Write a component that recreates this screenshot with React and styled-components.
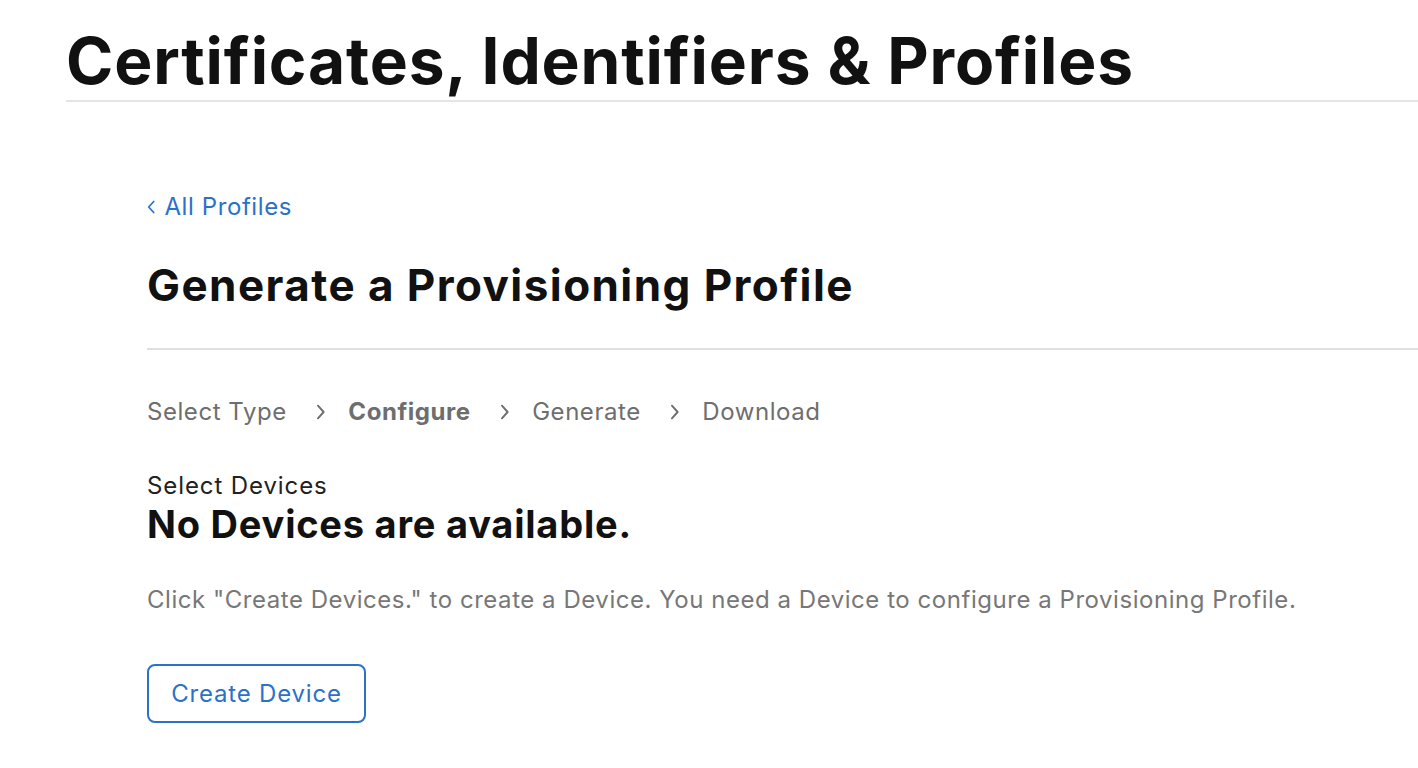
import React from "react";
import styled, { createGlobalStyle } from "styled-components";

const Global = createGlobalStyle`
  body {
    margin: 0;
    background: #fff;
    font-family: Inter, "Noto Sans", sans-serif;
    color: #111;
  }
`;

const Page = styled.div`
  padding-left: 66px;
  padding-top: 21px;
`;

const Header = styled.header`
  border-bottom: 2px solid #e5e5e5;
  h1 {
    margin: 0;
    font-size: 64px;
    font-weight: 700;
    line-height: 79px;
    letter-spacing: 0.85px;
  }
`;

const Main = styled.main`
  padding-left: 81px;
  padding-top: 90px;
`;

const BackLink = styled.a`
  display: inline-flex;
  align-items: center;
  gap: 9px;
  font-size: 24px;
  letter-spacing: 0.6px;
  color: #2a72c8;
  text-decoration: none;
  line-height: 30px;
`;

const TitleBlock = styled.div`
  border-bottom: 2px solid #e0e0e0;
  padding: 36px 0 36px;
  h2 {
    margin: 0;
    font-size: 44px;
    font-weight: 700;
    line-height: 54px;
    letter-spacing: 1.43px;
  }
`;

const Steps = styled.ol`
  list-style: none;
  margin: 0;
  padding: 0;
  margin-top: 47px;
  display: flex;
  align-items: center;
  gap: 23px;
  font-size: 24px;
  line-height: 30px;
  letter-spacing: 0.55px;
  color: #6e6e6e;
`;

const Step = styled.li`
  font-weight: ${(p) => (p.$active ? 700 : 400)};
  display: flex;
  align-items: center;
  gap: 29px;
`;

const Chevron = ({ color = "currentColor", size = 14, left = false }) => (
  <svg width={size * 0.6} height={size} viewBox="0 0 8 14" fill="none">
    <path
      d={left ? "M6.5 1.5 L1.5 7 L6.5 12.5" : "M1.5 1.5 L6.5 7 L1.5 12.5"}
      stroke={color}
      strokeWidth="1.7"
      strokeLinecap="round"
      strokeLinejoin="round"
    />
  </svg>
);

const Section = styled.section`
  margin-top: 44px;
`;

const Label = styled.div`
  font-size: 24px;
  line-height: 30px;
  letter-spacing: 0.9px;
  color: #222;
`;

const Empty = styled.h3`
  margin: 0;
  font-size: 38px;
  font-weight: 700;
  line-height: 46px;
  letter-spacing: 0.78px;
`;

const Hint = styled.p`
  margin: 38px 0 0;
  font-size: 24px;
  line-height: 30px;
  letter-spacing: 0.54px;
  color: #777;
`;

const Button = styled.button`
  margin-top: 49px;
  font-family: inherit;
  font-size: 24px;
  letter-spacing: 0.8px;
  color: #2a72c8;
  background: #fff;
  border: 2px solid #2a72c8;
  border-radius: 8px;
  width: 219px;
  height: 59px;
  cursor: pointer;
`;

const steps = ["Select Type", "Configure", "Generate", "Download"];

export default function App() {
  return (
    <Page>
      <Global />
      <Header>
        <h1>Certificates, Identifiers &amp; Profiles</h1>
      </Header>
      <Main>
        <BackLink href="#">
          <Chevron size={14} color="#2a72c8" left />
          All Profiles
        </BackLink>
        <TitleBlock>
          <h2>Generate a Provisioning Profile</h2>
        </TitleBlock>
        <Steps>
          {steps.map((s, i) => (
            <Step key={s} $active={s === "Configure"}>
              {s}
              {i < steps.length - 1 && <Chevron size={16} color="#6e6e6e" />}
            </Step>
          ))}
        </Steps>
        <Section>
          <Label>Select Devices</Label>
          <Empty>No Devices are available.</Empty>
          <Hint>
            Click "Create Devices." to create a Device. You need a Device to configure a Provisioning Profile.
          </Hint>
          <Button>Create Device</Button>
        </Section>
      </Main>
    </Page>
  );
}
